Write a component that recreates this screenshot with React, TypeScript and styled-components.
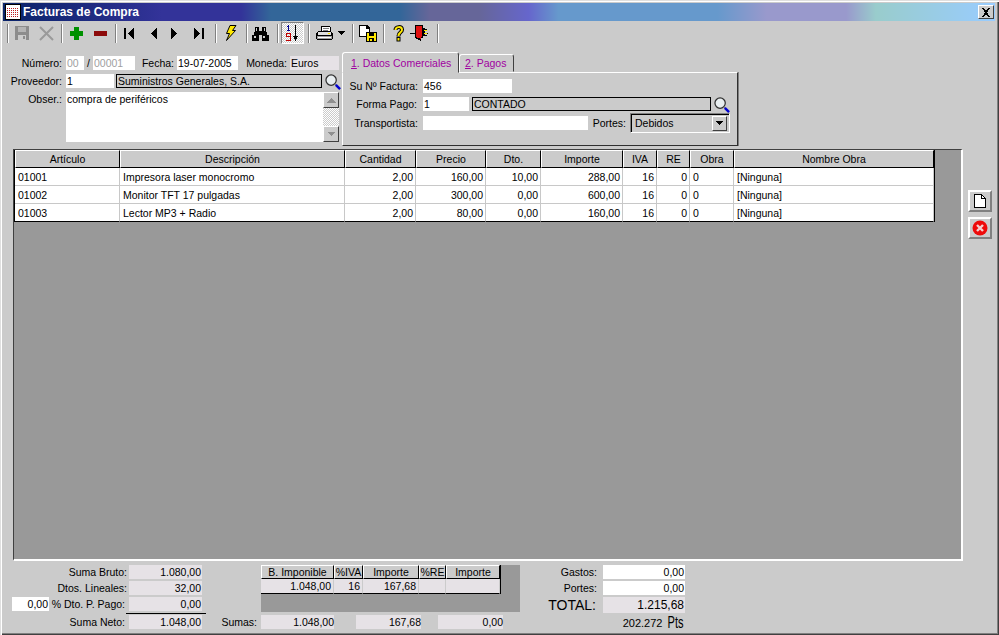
import React from "react";
import styled, { createGlobalStyle } from "styled-components";

const GlobalStyle = createGlobalStyle`
  html, body {
    margin: 0;
    padding: 0;
    background: #cbcbcb;
  }
  body {
    font-family: "Liberation Sans", Arial, sans-serif;
    font-size: 10.5px;
    color: #000;
  }
  * {
    box-sizing: border-box;
  }
  svg {
    display: block;
    shape-rendering: crispEdges;
  }
`;

const SmoothSvg = styled.svg`
  shape-rendering: auto;
`;

const Window = styled.div`
  width: 999px;
  height: 635px;
  overflow: hidden;
  background: #cbcbcb;
  box-shadow: inset 1px 1px #dfdfdf, inset 2px 2px #fff, inset -1px -1px #404040,
    inset -2px -2px #808080;
`;

const TitleBar = styled.div`
  height: 18px;
  margin: 3px 4px 0 3px;
  padding: 0 1px 0 2px;
  display: flex;
  align-items: center;
  gap: 2px;
  background: linear-gradient(
    90deg,
    #0a246a 0,
    #1c2a7e 8%,
    #333399 16%,
    #333399 24%,
    #336699 27%,
    #336699 40%,
    #666699 43%,
    #666699 48%,
    #6666cc 53%,
    #6699cc 56%,
    #6699cc 72%,
    #9999cc 77%,
    #9999cc 85%,
    #99cccc 88%,
    #99ccff 100%
  );
`;

const TitleText = styled.span`
  flex: 1;
  color: #fff;
  font-weight: 700;
  font-size: 12px;
`;

const CloseButton = styled.div`
  width: 16px;
  height: 14px;
  display: flex;
  align-items: center;
  justify-content: center;
  background: #cbcbcb;
  border: 1px solid;
  border-color: #fff #404040 #404040 #fff;
`;

const Toolbar = styled.div`
  height: 26px;
  margin-top: 1px;
  padding-left: 7px;
  display: flex;
  align-items: flex-start;
`;

const Separator = styled.div<{ $before?: number; $after?: number }>`
  width: 2px;
  height: 19px;
  margin: 2px ${(p) => p.$after ?? 1}px 0 ${(p) => p.$before ?? 3}px;
  background: linear-gradient(90deg, #808080 50%, #fff 50%);
`;

const ToolButton = styled.div<{ $w?: number; $on?: boolean }>`
  width: ${(p) => p.$w ?? 24}px;
  height: 22px;
  display: flex;
  align-items: center;
  justify-content: center;
  ${(p) =>
    p.$on
      ? `
    border: 1px solid;
    border-color: #808080 #fff #fff #808080;
    background: repeating-conic-gradient(#fff 0 25%, #cbcbcb 0 50%) 0 0 / 2px 2px;
  `
      : ""}
`;

const TopSection = styled.div`
  display: flex;
  padding-top: 4px;
`;

const HeaderForm = styled.div`
  width: 342px;
  padding-top: 4px;
  display: flex;
  flex-direction: column;
  gap: 4px;
`;

const FormRow = styled.div<{ $top?: number }>`
  display: flex;
  align-items: center;
  margin-top: ${(p) => p.$top ?? 0}px;
`;

const MemoRow = styled.div`
  display: flex;
  align-items: flex-start;
`;

const Label = styled.span<{ $w: number; $mr?: number; $center?: boolean }>`
  flex: none;
  width: ${(p) => p.$w}px;
  margin-right: ${(p) => p.$mr ?? 4}px;
  text-align: ${(p) => (p.$center ? "center" : "right")};
  line-height: 14px;
  white-space: nowrap;
`;

const fieldColors = {
  input: "background: #fff;",
  muted: "background: #fff; color: #a0a0a0;",
  readonly: "background: #e6e2e6;",
  lookup: "background: #cbcbcb; border: 1px solid #000;",
};

const Field = styled.div<{
  $w: number;
  $h?: number;
  $ml?: number;
  $kind?: keyof typeof fieldColors;
  $right?: boolean;
}>`
  flex: none;
  width: ${(p) => p.$w}px;
  height: ${(p) => p.$h ?? 14}px;
  margin-left: ${(p) => p.$ml ?? 0}px;
  padding: 0 1px;
  line-height: ${(p) => (p.$kind === "lookup" ? 12 : 14)}px;
  white-space: nowrap;
  overflow: hidden;
  text-align: ${(p) => (p.$right ? "right" : "left")};
  ${(p) => fieldColors[p.$kind ?? "input"]}
`;

const Scrollbar = styled.div`
  flex: none;
  width: 16px;
  height: 50px;
  display: flex;
  flex-direction: column;
  justify-content: space-between;
  background: repeating-conic-gradient(#fff 0 25%, #cbcbcb 0 50%) 0 0 / 2px 2px;
`;

const ScrollButton = styled.div`
  height: 16px;
  display: flex;
  align-items: center;
  justify-content: center;
  background: #cbcbcb;
  border: 1px solid;
  border-color: #fff #404040 #404040 #fff;
`;

const LookupIcon = styled.div<{ $ml: number }>`
  flex: none;
  height: 14px;
  margin-left: ${(p) => p.$ml}px;
`;

const TabColumn = styled.div`
  width: 396px;
  display: flex;
  flex-direction: column;
`;

const TabStrip = styled.div`
  height: 20px;
  display: flex;
  align-items: flex-end;
`;

const Tab = styled.div<{ $active?: boolean; $w: number }>`
  width: ${(p) => p.$w}px;
  height: ${(p) => (p.$active ? 21 : 18)}px;
  margin-bottom: ${(p) => (p.$active ? -1 : 0)}px;
  padding-left: ${(p) => (p.$active ? 8 : 5)}px;
  position: relative;
  z-index: ${(p) => (p.$active ? 1 : 0)};
  display: flex;
  align-items: center;
  white-space: nowrap;
  color: #a000a0;
  font-size: 10.5px;
  background: #cbcbcb;
  border: 1px solid;
  border-color: #fff #404040 transparent #fff;
  border-radius: 3px 3px 0 0;

  u {
    text-underline-offset: 1px;
  }
`;

const TabPanel = styled.div`
  height: 74px;
  padding-top: 6px;
  background: #cbcbcb;
  border: 1px solid;
  border-color: #fff #303030 #303030 #fff;
  box-shadow: 1px 0 #808080;
  display: flex;
  flex-direction: column;
  gap: 4px;
`;

const SelectBox = styled.div`
  width: 100px;
  height: 20px;
  margin-left: 4px;
  padding: 2px;
  display: flex;
  align-items: center;
  border: 1px solid;
  border-color: #808080 #fff #fff #808080;
  box-shadow: inset 1px 1px #000;
`;

const SelectValue = styled.span`
  flex: 1;
  padding-left: 2px;
`;

const SelectArrow = styled.div`
  width: 15px;
  height: 15px;
  display: flex;
  align-items: center;
  justify-content: center;
  background: #cbcbcb;
  border: 1px solid;
  border-color: #fff #404040 #404040 #fff;
`;

const GridArea = styled.div`
  display: flex;
  margin-top: 3px;
`;

const GridPanel = styled.div`
  width: 950px;
  height: 412px;
  margin-left: 13px;
  background: #999;
  border: solid;
  border-width: 1px 2px 2px 1px;
  border-color: #404040 #fff #fff #404040;
`;

const DataTable = styled.table`
  width: 921px;
  table-layout: fixed;
  border-collapse: separate;
  border-spacing: 0;
  border-left: 1px solid #000;
  border-right: 1px solid #000;
  background: #fff;

  tbody tr:last-child td {
    border-bottom-color: #000;
  }
`;

const Th = styled.th`
  height: 18px;
  padding: 0;
  font-weight: 400;
  font-size: 10.5px;
  text-align: center;
  background: #cbcbcb;
  border: 1px solid;
  border-color: #fff #000 #000 #fff;
`;

const Td = styled.td<{ $right?: boolean }>`
  height: 18px;
  padding: 0 2px 0 3px;
  font-size: 10.5px;
  text-align: ${(p) => (p.$right ? "right" : "left")};
  white-space: nowrap;
  overflow: hidden;
  border-right: 1px solid #c8c8c8;
  border-bottom: 1px solid #c8c8c8;
`;

const SideButtons = styled.div`
  margin: 41px 0 0 5px;
  display: flex;
  flex-direction: column;
  gap: 5px;
`;

const SideButton = styled.div`
  width: 24px;
  height: 22px;
  display: flex;
  align-items: center;
  justify-content: center;
  background: #cbcbcb;
  border: 2px solid;
  border-color: #fff #808080 #808080 #fff;
`;

const Footer = styled.div`
  display: flex;
  padding-top: 4px;
`;

const TotalsColumn = styled.div<{ $w: number }>`
  width: ${(p) => p.$w}px;
  display: flex;
  flex-direction: column;
  gap: 2px;
`;

const DiscountField = styled.div`
  margin-left: 12px;
`;

const SumLine = styled.div`
  width: 80px;
  height: 1px;
  margin: 0 0 -1px 126px;
  background: #000;
`;

const TaxColumn = styled.div`
  width: 314px;
  display: flex;
  flex-direction: column;
  gap: 3px;
`;

const TaxPanel = styled.div`
  width: 259px;
  height: 47px;
  margin-left: 55px;
  background: #999;
`;

const TaxTable = styled.table`
  width: 240px;
  table-layout: fixed;
  border-collapse: separate;
  border-spacing: 0;
  border-right: 1px solid #000;
`;

const TaxTh = styled.th`
  height: 14px;
  padding: 0;
  font-weight: 400;
  font-size: 10.5px;
  line-height: 12px;
  background: #cbcbcb;
  border: 1px solid;
  border-color: #fff #000 #000 #fff;
`;

const TaxTd = styled.td`
  height: 15px;
  padding: 0 2px;
  font-size: 10.5px;
  text-align: right;
  background: #e6e2e6;
  border-right: 1px solid #cbcbcb;
  border-bottom: 1px solid #000;
`;

const SumRow = styled.div`
  display: flex;
  align-items: center;
`;

const SumField = styled.div<{ $w: number; $ml?: number }>`
  width: ${(p) => p.$w}px;
  height: 14px;
  margin-left: ${(p) => p.$ml ?? 0}px;
  line-height: 14px;
  text-align: right;
  background: #e6e2e6;
`;

const BigLabel = styled(Label)`
  font-size: 14px;
`;

const BigField = styled(Field)`
  height: 16px;
  font-size: 12px;
  line-height: 16px;
`;

const PesetaRow = styled.div`
  width: 164px;
  height: 16px;
  display: flex;
  align-items: center;
  justify-content: flex-end;
  font-size: 11px;
`;

const PesetaUnit = styled.span`
  display: inline-block;
  margin-left: -3px;
  font-size: 17px;
  transform: scaleX(0.65);
  transform-origin: right center;
`;

// iconos de la barra, dibujados a mano
const WindowIcon = () => (
  <svg width="16" height="16" viewBox="0 0 16 16">
    <defs>
      <pattern id="dots" width="2" height="2" patternUnits="userSpaceOnUse">
        <rect width="2" height="2" fill="#fff" />
        <rect width="1" height="1" fill="#c02020" />
      </pattern>
    </defs>
    <rect x="0.5" y="0.5" width="15" height="15" fill="#fff" stroke="#000" />
    <rect x="2" y="3" width="12" height="11" fill="url(#dots)" />
  </svg>
);

const CloseIcon = () => (
  <svg width="10" height="9" viewBox="0 0 10 9">
    <path d="M1 0h2l2 2.500 2-2.500h2l-3 4.500 3 4.500h-2l-2-2.500-2 2.500h-2l3-4.500z" fill="#000" />
  </svg>
);

const SaveIcon = () => (
  <svg width="16" height="16" viewBox="0 0 16 16">
    <path d="M1 1h14v14h-14z" fill="#8c8c8c" />
    <path d="M4 2h8v5h-8z" fill="#b4b4b4" />
    <path d="M4 10h8v5h-8z" fill="#cbcbcb" />
    <path d="M9 11h2v3h-2z" fill="#8c8c8c" />
  </svg>
);

const CrossIcon = () => (
  <SmoothSvg width="15" height="15" viewBox="0 0 15 15">
    <path d="M1 1l13 13M14 1l-13 13" stroke="#9a9a9a" strokeWidth="2" />
  </SmoothSvg>
);

const PlusIcon = () => (
  <svg width="13" height="13" viewBox="0 0 13 13">
    <path d="M4 0h5v4h4v5h-4v4h-5v-4h-4v-5h4z" fill="#009000" />
  </svg>
);

const MinusIcon = () => (
  <svg width="13" height="5" viewBox="0 0 13 5">
    <path d="M0 0h13v5h-13z" fill="#8c0a0a" />
  </svg>
);

const NavIcon = ({ dir, bar }: { dir: "left" | "right"; bar?: boolean }) => (
  <svg width="11" height="11" viewBox="0 0 11 11">
    {dir === "left" ? (
      <>
        {bar && <path d="M0 0h2v11h-2z" fill="#000" />}
        <path d="M10 0v11l-6-5.500z" fill="#000" />
      </>
    ) : (
      <>
        <path d="M1 0v11l6-5.500z" fill="#000" />
        {bar && <path d="M9 0h2v11h-2z" fill="#000" />}
      </>
    )}
  </svg>
);

const BoltIcon = () => (
  <SmoothSvg width="13" height="16" viewBox="0 0 13 16">
    <path d="M6 .5h6l-3.500 5h3l-9 10 3-7h-3z" fill="#ffe800" stroke="#000" strokeWidth="1" />
  </SmoothSvg>
);

const BinocularsIcon = () => (
  <svg width="17" height="15" viewBox="0 0 17 15">
    <path d="M3 1h4v4h3v-4h4v5h1v3h2v6h-7v-6h-3v6h-7v-6h2v-3h1z" fill="#000" />
    <path d="M4 2h1v3h-1zM12 2h1v3h-1zM2 10h2v2h-2zM11 10h2v2h-2z" fill="#cbcbcb" />
  </svg>
);

const SortIcon = () => (
  <svg width="13" height="16" viewBox="0 0 13 16">
    <path d="M2 0h1v5h1v1h-3v-1h1v-3h-1v-1h1z" fill="#000090" />
    <path d="M0 8h5v8h-5v-1h4v-3h-4zM1 9v2h3v-2z" fill="#c00000" fillRule="evenodd" />
    <path d="M9 0h1v11h2l-2.500 5-2.500-5h2z" fill="#000" />
  </svg>
);

const PrinterIcon = () => (
  <svg width="17" height="15" viewBox="0 0 17 15">
    <path d="M5 0h9v1h1v4h-1v1h-9z" fill="#000" />
    <path d="M6 1h8v4h-8z" fill="#fff" />
    <path d="M7 2h6v1h-6zM7 4h5v1h-5z" fill="#808080" />
    <path d="M2 5h13v1h1v1h1v6h-1v1h-15v-1h-1v-6h1v-1h1z" fill="#000" />
    <path d="M2 6h13v3h-13z" fill="#e0e0e0" />
    <path d="M1 10h15v3h-15z" fill="#a0a0a0" />
    <path d="M2 11h13v1h-13z" fill="#fff" />
    <path d="M12 7h2v1h-2z" fill="#ffe800" />
  </svg>
);

const DropIcon = ({ color = "#000" }: { color?: string }) => (
  <svg width="7" height="4" viewBox="0 0 7 4">
    <path d="M0 0h7l-3.500 4z" fill={color} />
  </svg>
);

const UpIcon = () => (
  <svg width="9" height="5" viewBox="0 0 9 5">
    <path d="M4.500 0l4.500 5h-9z" fill="#909090" />
  </svg>
);

const DocSaveIcon = () => (
  <svg width="18" height="17" viewBox="0 0 18 17">
    <path d="M0 0h8l3 3v9h-11z" fill="#000" />
    <path d="M1 1h6v3h3v7h-9z" fill="#fff" />
    <path d="M7 7h11v10h-11z" fill="#000" />
    <path d="M8 8h9v8h-9z" fill="#ffe800" />
    <path d="M10 8h5v3h-5zM10 13h5v3h-5z" fill="#000" />
    <path d="M11 14h2v2h-2z" fill="#ffe800" />
  </svg>
);

const HelpIcon = () => (
  <SmoothSvg width="13" height="17" viewBox="0 0 13 17">
    <path
      d="M3.500 5C3.500 1.500 9.500 1 10 4.500 10.400 7.500 6.500 7 6.500 11"
      fill="none"
      stroke="#000"
      strokeWidth="4"
    />
    <path d="M4.500 11.500h4v5h-4z" fill="#000" />
    <path
      d="M3.500 5C3.500 1.500 9.500 1 10 4.500 10.400 7.500 6.500 7 6.500 11"
      fill="none"
      stroke="#ffe800"
      strokeWidth="2"
    />
    <path d="M5.500 13h2v2.500h-2z" fill="#ffe800" />
  </SmoothSvg>
);

const ExitIcon = () => (
  <svg width="20" height="16" viewBox="0 0 20 16">
    <path d="M5 0h8v13h-2v3l-6-3z" fill="#000" />
    <path d="M6 1h6v11h-1v2l-5-2z" fill="#e01010" />
    <path d="M0 8h6v1h-6z" fill="#000" />
    <path d="M13 3h2v1h2v2h-2v2h3v1h-3v1h2v1h-4z" fill="#000" />
    <path d="M14 5h3v1h-3zM14 8h3v1h-3z" fill="#ffe800" />
  </svg>
);

const SearchIcon = () => (
  <SmoothSvg width="16" height="16" viewBox="0 0 17 17">
    <circle cx="6.500" cy="6.500" r="5.500" fill="#e8eef0" stroke="#303030" strokeWidth="1.300" />
    <path d="M10.500 10.500l1 1" stroke="#808080" strokeWidth="2" />
    <path d="M11.500 11.500l4.500 4.500" stroke="#0000d0" strokeWidth="2.600" />
  </SmoothSvg>
);

const NewDocIcon = () => (
  <svg width="12" height="14" viewBox="0 0 12 14">
    <path d="M.5.500h7l4 4v9h-11z" fill="#fff" stroke="#000" />
    <path d="M7.500.500v4h4" fill="none" stroke="#000" />
  </svg>
);

const DeleteIcon = () => (
  <SmoothSvg width="16" height="16" viewBox="0 0 16 16">
    <circle cx="8" cy="8" r="7.500" fill="#ee0a0a" />
    <path d="M5 5l6 6M11 5l-6 6" stroke="#f4d0d0" strokeWidth="2.400" />
  </SmoothSvg>
);

const columns = [
  { title: "Artículo", w: 105 },
  { title: "Descripción", w: 225 },
  { title: "Cantidad", w: 71 },
  { title: "Precio", w: 70 },
  { title: "Dto.", w: 55 },
  { title: "Importe", w: 82 },
  { title: "IVA", w: 34 },
  { title: "RE", w: 33 },
  { title: "Obra", w: 44 },
  { title: "Nombre Obra", w: 200 },
];

const lines = [
  ["01001", "Impresora laser monocromo", "2,00", "160,00", "10,00", "288,00", "16", "0", "0", "[Ninguna]"],
  ["01002", "Monitor TFT 17 pulgadas", "2,00", "300,00", "0,00", "600,00", "16", "0", "0", "[Ninguna]"],
  ["01003", "Lector MP3 + Radio", "2,00", "80,00", "0,00", "160,00", "16", "0", "0", "[Ninguna]"],
];

const rightCols = [2, 3, 4, 5, 6, 7];

const taxColumns = [
  { title: "B. Imponible", w: 73 },
  { title: "%IVA", w: 29 },
  { title: "Importe", w: 56 },
  { title: "%RE", w: 27 },
  { title: "Importe", w: 54 },
];

export default function App() {
  return (
    <Window>
      <GlobalStyle />
      <TitleBar>
        <WindowIcon />
        <TitleText>Facturas de Compra</TitleText>
        <CloseButton>
          <CloseIcon />
        </CloseButton>
      </TitleBar>

      <Toolbar>
        <Separator $before={0} />
        <ToolButton><SaveIcon /></ToolButton>
        <ToolButton><CrossIcon /></ToolButton>
        <Separator />
        <ToolButton><PlusIcon /></ToolButton>
        <ToolButton><MinusIcon /></ToolButton>
        <Separator />
        <ToolButton $w={23}><NavIcon dir="left" bar /></ToolButton>
        <ToolButton $w={23}><NavIcon dir="left" /></ToolButton>
        <ToolButton $w={23}><NavIcon dir="right" /></ToolButton>
        <ToolButton $w={23}><NavIcon dir="right" bar /></ToolButton>
        <Separator $before={5} />
        <ToolButton><BoltIcon /></ToolButton>
        <Separator $before={4} />
        <ToolButton $w={23}><BinocularsIcon /></ToolButton>
        <Separator $before={5} $after={2} />
        <ToolButton $w={23} $on><SortIcon /></ToolButton>
        <Separator $before={4} $after={3} />
        <ToolButton $w={23}><PrinterIcon /></ToolButton>
        <ToolButton $w={10}><DropIcon /></ToolButton>
        <Separator $before={6} $after={4} />
        <ToolButton $w={20}><DocSaveIcon /></ToolButton>
        <Separator $before={5} />
        <ToolButton><HelpIcon /></ToolButton>
        <ToolButton $w={20}><ExitIcon /></ToolButton>
        <Separator $before={7} />
      </Toolbar>

      <TopSection>
        <HeaderForm>
          <FormRow>
            <Label $w={62}>Número:</Label>
            <Field $w={18} $kind="muted">00</Field>
            <Label $w={9} $mr={0} $center>/</Label>
            <Field $w={42} $kind="muted">00001</Field>
            <Label $w={39} $mr={3}>Fecha:</Label>
            <Field $w={61}>19-07-2005</Field>
            <Label $w={49} $mr={3}>Moneda:</Label>
            <Field $w={49} $kind="readonly">Euros</Field>
          </FormRow>
          <FormRow>
            <Label $w={62}>Proveedor:</Label>
            <Field $w={48}>1</Field>
            <Field $w={206} $ml={2} $kind="lookup">Suministros Generales, S.A.</Field>
            <LookupIcon $ml={3}><SearchIcon /></LookupIcon>
          </FormRow>
          <MemoRow>
            <Label $w={62}>Obser.:</Label>
            <Field $w={257} $h={50}>compra de periféricos</Field>
            <Scrollbar>
              <ScrollButton><UpIcon /></ScrollButton>
              <ScrollButton><DropIcon color="#909090" /></ScrollButton>
            </Scrollbar>
          </MemoRow>
        </HeaderForm>

        <TabColumn>
          <TabStrip>
            <Tab $active $w={117}><span><u>1</u>. Datos Comerciales</span></Tab>
            <Tab $w={55}><span><u>2</u>. Pagos</span></Tab>
          </TabStrip>
          <TabPanel>
            <FormRow>
              <Label $w={75} $mr={5}>Su Nº Factura:</Label>
              <Field $w={89}>456</Field>
            </FormRow>
            <FormRow>
              <Label $w={74} $mr={6}>Forma Pago:</Label>
              <Field $w={46}>1</Field>
              <Field $w={239} $ml={3} $kind="lookup">CONTADO</Field>
              <LookupIcon $ml={3}><SearchIcon /></LookupIcon>
            </FormRow>
            <FormRow $top={-2}>
              <Label $w={75} $mr={5}>Transportista:</Label>
              <Field $w={165}></Field>
              <Label $w={38} $mr={0}>Portes:</Label>
              <SelectBox>
                <SelectValue>Debidos</SelectValue>
                <SelectArrow><DropIcon /></SelectArrow>
              </SelectBox>
            </FormRow>
          </TabPanel>
        </TabColumn>
      </TopSection>

      <GridArea>
        <GridPanel>
          <DataTable>
            <colgroup>
              {columns.map((c) => (
                <col key={c.title} style={{ width: c.w }} />
              ))}
            </colgroup>
            <thead>
              <tr>
                {columns.map((c) => (
                  <Th key={c.title}>{c.title}</Th>
                ))}
              </tr>
            </thead>
            <tbody>
              {lines.map((line) => (
                <tr key={line[0]}>
                  {line.map((value, i) => (
                    <Td key={i} $right={rightCols.includes(i)}>{value}</Td>
                  ))}
                </tr>
              ))}
            </tbody>
          </DataTable>
        </GridPanel>
        <SideButtons>
          <SideButton><NewDocIcon /></SideButton>
          <SideButton><DeleteIcon /></SideButton>
        </SideButtons>
      </GridArea>

      <Footer>
        <TotalsColumn $w={206}>
          <FormRow>
            <Label $w={127} $mr={2}>Suma Bruto:</Label>
            <Field $w={73} $kind="readonly" $right>1.080,00</Field>
          </FormRow>
          <FormRow>
            <Label $w={127} $mr={2}>Dtos. Lineales:</Label>
            <Field $w={73} $kind="readonly" $right>32,00</Field>
          </FormRow>
          <FormRow>
            <DiscountField>
              <Field $w={37} $right>0,00</Field>
            </DiscountField>
            <Label $w={76} $mr={4}>% Dto. P. Pago:</Label>
            <Field $w={73} $kind="readonly" $right>0,00</Field>
          </FormRow>
          <SumLine />
          <FormRow>
            <Label $w={125} $mr={4}>Suma Neto:</Label>
            <Field $w={73} $kind="readonly" $right>1.048,00</Field>
          </FormRow>
        </TotalsColumn>

        <TaxColumn>
          <TaxPanel>
            <TaxTable>
              <colgroup>
                {taxColumns.map((c, i) => (
                  <col key={i} style={{ width: c.w }} />
                ))}
              </colgroup>
              <thead>
                <tr>
                  {taxColumns.map((c, i) => (
                    <TaxTh key={i}>{c.title}</TaxTh>
                  ))}
                </tr>
              </thead>
              <tbody>
                <tr>
                  <TaxTd>1.048,00</TaxTd>
                  <TaxTd>16</TaxTd>
                  <TaxTd>167,68</TaxTd>
                  <TaxTd></TaxTd>
                  <TaxTd></TaxTd>
                </tr>
              </tbody>
            </TaxTable>
          </TaxPanel>
          <SumRow>
            <Label $w={51} $mr={4}>Sumas:</Label>
            <SumField $w={73}>1.048,00</SumField>
            <SumField $w={65} $ml={22}>167,68</SumField>
            <SumField $w={65} $ml={17}>0,00</SumField>
          </SumRow>
        </TaxColumn>

        <TotalsColumn $w={170}>
          <FormRow>
            <Label $w={77} $mr={6}>Gastos:</Label>
            <Field $w={82} $right>0,00</Field>
          </FormRow>
          <FormRow>
            <Label $w={77} $mr={6}>Portes:</Label>
            <Field $w={82} $right>0,00</Field>
          </FormRow>
          <FormRow>
            <BigLabel $w={76} $mr={7}>TOTAL:</BigLabel>
            <BigField $w={82} $kind="readonly" $right>1.215,68</BigField>
          </FormRow>
          <PesetaRow>
            <span>202.272</span>
            <PesetaUnit>Pts</PesetaUnit>
          </PesetaRow>
        </TotalsColumn>
      </Footer>
    </Window>
  );
}
